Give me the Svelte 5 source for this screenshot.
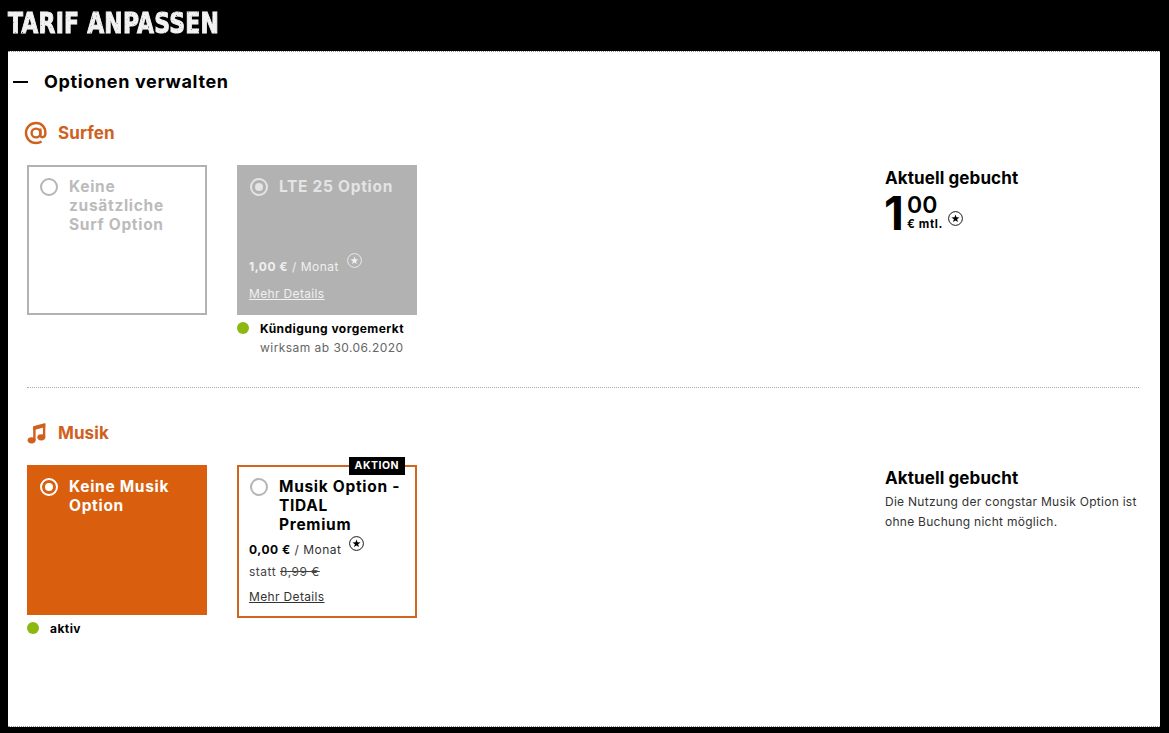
<script>
	const options = 'static';
</script>

{#snippet asterisk(cls)}
	<svg class="star {cls}" viewBox="0 0 15 15" width="15" height="15" aria-hidden="true">
		<circle cx="7.5" cy="7.5" r="6.9" fill="none" stroke="currentColor" stroke-width="0.9" />
		<path d="M7.500 3.400l1 2.900 3 .1-2.400 1.800.9 2.900-2.500-1.700-2.500 1.700.9-2.900-2.400-1.800 3-.1z" fill="currentColor" />
	</svg>
{/snippet}

<div class="page">
	<div class="title-bar">
		<svg class="defs" width="0" height="0" aria-hidden="true">
			<filter id="rough" x="0" y="0" width="100%" height="100%">
				<feTurbulence type="fractalNoise" baseFrequency="0.6" numOctaves="2" seed="4" result="noise" />
				<feColorMatrix in="noise" type="matrix" values="0 0 0 0 0  0 0 0 0 0  0 0 0 0 0  0 0 0 -3.500 3.400" result="mask" />
				<feComposite in="SourceGraphic" in2="mask" operator="in" />
			</filter>
		</svg>
		<h1>TARIF ANPASSEN</h1>
	</div>
	<main class="panel">
		<div class="accordion-head">
			<span class="dash"></span>
			<h2>Optionen verwalten</h2>
		</div>

		<section class="group first">
			<h3>
				<svg class="cat" viewBox="0 0 24 24" width="24" height="24" aria-hidden="true">
					<circle cx="12" cy="12" r="4.4" fill="none" stroke="currentColor" stroke-width="2.4" />
					<path d="M16.400 7.500v6.600c0 3 4.800 3 5-1.600C21.700 6 17.500 2 12 2 6.300 2 2 6.400 2 12c0 5.700 4.300 10 10 10 2.200 0 4-.5 5.600-1.500" fill="none" stroke="currentColor" stroke-width="2.400" />
				</svg>
				Surfen
			</h3>
			<div class="row">
				<div class="options">
					<div class="col">
						<div class="card outline">
							<div class="head">
								<span class="radio"></span>
								<span class="name">Keine zusätzliche Surf Option</span>
							</div>
						</div>
					</div>
					<div class="col">
						<div class="card grey">
							<div class="head">
								<span class="radio on"></span>
								<span class="name">LTE 25 Option</span>
							</div>
							<div class="foot">
								<p class="price"><b>1,00 €</b> / Monat {@render asterisk('up')}</p>
								<a href="#lte">Mehr Details</a>
							</div>
						</div>
						<div class="status">
							<span class="dot"></span>
							<div>
								<b>Kündigung vorgemerkt</b>
								<p>wirksam ab 30.06.2020</p>
							</div>
						</div>
					</div>
				</div>
				<aside class="booked">
					<h4>Aktuell gebucht</h4>
					<div class="amount">
						<span class="euros">1</span>
						<span class="rest"><span class="cents">00</span><span class="unit">€ mtl.</span></span>
						{@render asterisk('amount-star')}
					</div>
				</aside>
			</div>
		</section>

		<section class="group second">
			<h3>
				<svg class="cat" viewBox="0 0 24 24" width="24" height="24" aria-hidden="true">
					<path d="M9.200 5.200L21.300 2v4L9.200 9.200z" fill="currentColor" />
					<path d="M10.400 19V6M20.100 16V3" fill="none" stroke="currentColor" stroke-width="2.400" />
					<ellipse cx="7.600" cy="19.300" rx="4" ry="3.100" fill="currentColor" />
					<ellipse cx="17.300" cy="16.300" rx="4" ry="3.100" fill="currentColor" />
				</svg>
				Musik
			</h3>
			<div class="row">
				<div class="options">
					<div class="col">
						<div class="card orange">
							<div class="head">
								<span class="radio on"></span>
								<span class="name">Keine Musik Option</span>
							</div>
						</div>
						<div class="status">
							<span class="dot"></span>
							<div><b>aktiv</b></div>
						</div>
					</div>
					<div class="col">
						<div class="card promo">
							<span class="badge">AKTION</span>
							<div class="head">
								<span class="radio"></span>
								<span class="name">Musik Option - TIDAL Premium</span>
							</div>
							<div class="foot">
								<p class="price"><b>0,00 €</b> / Monat {@render asterisk('up')}</p>
								<p class="was">statt <s>8,99 €</s></p>
								<a href="#tidal">Mehr Details</a>
							</div>
						</div>
					</div>
				</div>
				<aside class="booked">
					<h4>Aktuell gebucht</h4>
					<p class="note">Die Nutzung der congstar Musik Option ist ohne Buchung nicht möglich.</p>
				</aside>
			</div>
		</section>
	</main>
</div>

<style>
	:global(body) {
		margin: 0;
		background: #000;
	}
	.page {
		height: 733px;
		padding: 0 9px 6px 8px;
		box-sizing: border-box;
		display: flex;
		flex-direction: column;
		font-family: Inter, "Liberation Sans", sans-serif;
		color: #000;
		overflow: hidden;
	}
	.title-bar {
		height: 51px;
		flex: none;
		padding-top: 7px;
		box-sizing: border-box;
	}
	.defs {
		display: block;
	}
	h1 {
		margin: 0;
		font-family: "DejaVu Sans Condensed", "Liberation Sans", sans-serif;
		font-weight: 700;
		font-size: 29px;
		line-height: 32px;
		letter-spacing: 0.3px;
		color: #f2f2f2;
		-webkit-text-stroke: 1px #f2f2f2;
		white-space: nowrap;
		transform: scaleX(0.84);
		transform-origin: left center;
		filter: url(#rough);
	}
	.panel {
		flex: 1;
		background: #fff;
		border-top: 1px dotted #999;
		border-bottom: 1px dotted #999;
	}
	.accordion-head {
		display: flex;
		align-items: center;
		gap: 15px;
		padding: 18px 0 0 5px;
		height: 24px;
	}
	.dash {
		width: 15px;
		height: 2px;
		background: #000;
		margin-right: 1px;
	}
	h2 {
		margin: 0;
		font-size: 18px;
		font-weight: 700;
		letter-spacing: 0.65px;
		line-height: 24px;
	}
	.group {
		padding: 0 21px 0 19px;
	}
	.group.first {
		padding-top: 26px;
		padding-bottom: 31px;
		position: relative;
	}
	.group.first::after {
		content: "";
		position: absolute;
		left: 19px;
		right: 21px;
		bottom: 0;
		border-bottom: 1px dotted #aaa;
	}
	.group.second {
		padding-top: 32px;
	}
	h3 {
		margin: 0 0 19px -3px;
		display: flex;
		align-items: center;
		gap: 10px;
		height: 26px;
		font-size: 17px;
		font-weight: 700;
		letter-spacing: 0.1px;
		color: #d0601c;
	}
	.cat {
		flex: none;
	}
	.row {
		display: flex;
		justify-content: space-between;
	}
	.options {
		display: flex;
		gap: 30px;
	}
	.col {
		width: 180px;
	}
	.card {
		position: relative;
		box-sizing: border-box;
		width: 180px;
		min-height: 150px;
		padding: 13px 12px 13px;
		display: flex;
		flex-direction: column;
		justify-content: space-between;
	}
	.outline {
		border: 2px solid #b2b2b2;
		padding: 11px 10px 11px;
		color: #bbb;
	}
	.grey {
		background: #b2b2b2;
		color: #fff;
	}
	.orange {
		background: #d95f0f;
		color: #fff;
	}
	.promo {
		border: 2px solid #d0651f;
		min-height: 153px;
		padding: 11px 10px 11px;
	}
	.head {
		display: flex;
		gap: 11px;
		padding-left: 1px;
	}
	.radio {
		flex: none;
		box-sizing: border-box;
		width: 18px;
		height: 18px;
		border: 2px solid #b5b5b5;
		border-radius: 50%;
		position: relative;
	}
	.radio.on::after {
		content: "";
		position: absolute;
		inset: 3px;
		border-radius: 50%;
		background: #fff;
	}
	.grey .radio.on {
		border-color: #e4e4e4;
	}
	.grey .radio.on::after {
		background: #e4e4e4;
	}
	.orange .radio.on {
		border-color: #fff;
	}
	.name {
		font-size: 15.5px;
		font-weight: 700;
		line-height: 19px;
		letter-spacing: 0.7px;
		margin-top: -1px;
	}
	.promo .name {
		max-width: 122px;
	}
	.grey .name {
		color: #e4e4e4;
	}
	.foot {
		font-size: 12px;
		letter-spacing: 0.5px;
	}
	.foot p {
		margin: 0;
	}
	.grey .foot {
		color: #f0f0f0;
	}
	.price {
		line-height: 18px;
	}
	.promo .price {
		color: #333;
	}
	.promo .price b {
		color: #000;
	}
	.was {
		margin-top: 4px !important;
		color: #444;
		line-height: 18px;
	}
	.foot a {
		display: block;
		margin-top: 10px;
		color: inherit;
		line-height: 16px;
		letter-spacing: 0.35px;
	}
	.promo .foot a {
		margin-top: 8px;
		color: #333;
	}
	.star {
		display: inline-block;
	}
	.star.up {
		vertical-align: 8px;
		margin: -5px 0 -5px 4px;
	}
	.promo .star.up {
		color: #000;
	}
	.badge {
		position: absolute;
		top: -10px;
		right: 10px;
		background: #000;
		color: #fff;
		font-size: 10.5px;
		font-weight: 700;
		letter-spacing: 0.5px;
		line-height: 18px;
		padding: 0 6px;
	}
	.status {
		display: flex;
		gap: 11px;
		margin-top: 4px;
		font-size: 12px;
		line-height: 19px;
		letter-spacing: 0.45px;
	}
	.status p {
		margin: 0;
		color: #666;
	}
	.dot {
		flex: none;
		width: 12px;
		height: 12px;
		margin-top: 3px;
		border-radius: 50%;
		background: #8cb811;
	}
	.booked {
		width: 254px;
		flex: none;
	}
	h4 {
		margin: 1px 0 0;
		font-size: 17px;
		font-weight: 700;
		line-height: 24px;
		letter-spacing: 0.1px;
	}
	.amount {
		display: flex;
		align-items: flex-start;
	}
	.euros {
		font-size: 46px;
		font-weight: 700;
		line-height: 46px;
		width: 22px;
		margin-left: -1px;
		margin-right: 1px;
	}
	.rest {
		display: flex;
		flex-direction: column;
		margin-top: 3px;
	}
	.cents {
		font-size: 23px;
		font-weight: 600;
		line-height: 24px;
	}
	.unit {
		font-size: 11.5px;
		font-weight: 700;
		line-height: 15px;
		letter-spacing: 0.6px;
	}
	.amount-star {
		margin: 21px 0 0 5px;
	}
	.note {
		margin: 2px 0 0;
		font-size: 12px;
		line-height: 20px;
		letter-spacing: 0.27px;
		color: #333;
	}
</style>
